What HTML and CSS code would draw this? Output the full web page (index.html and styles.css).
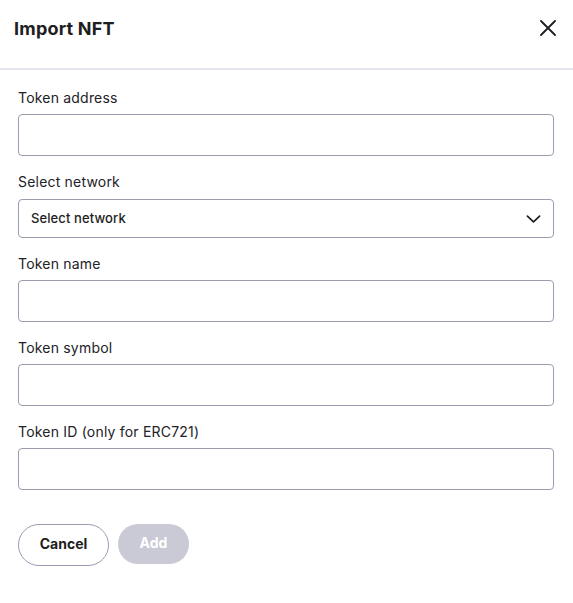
FILE: index.html
```html
<!DOCTYPE html>
<html>
<head>
<meta charset="utf-8">
<link rel="stylesheet" href="styles.css">
</head>
<body>
<div class="modal">
  <div class="header">
    <h1 class="title">Import NFT</h1>
    <button class="close" aria-label="Close">
      <svg width="16" height="16" viewBox="0 0 16 16"><path d="M1 1L15 15M15 1L1 15" stroke="#1d1d22" stroke-width="1.8" stroke-linecap="round"/></svg>
    </button>
  </div>
  <form class="body">
    <div class="field">
      <label class="label">Token address</label>
      <input class="input" type="text">
    </div>
    <div class="field">
      <label class="label">Select network</label>
      <div class="select">
        <span>Select network</span>
        <svg width="15" height="10" viewBox="0 0 16 10"><path d="M1.5 2L8 8L14.5 2" fill="none" stroke="#1d1d22" stroke-width="1.8" stroke-linecap="round" stroke-linejoin="round"/></svg>
      </div>
    </div>
    <div class="field">
      <label class="label">Token name</label>
      <input class="input" type="text">
    </div>
    <div class="field">
      <label class="label">Token symbol</label>
      <input class="input" type="text">
    </div>
    <div class="field">
      <label class="label">Token ID (only for ERC721)</label>
      <input class="input" type="text">
    </div>
    <div class="actions">
      <button type="button" class="btn btn-cancel">Cancel</button>
      <button type="button" class="btn btn-add" disabled>Add</button>
    </div>
  </form>
</div>
</body>
</html>
```
FILE: styles.css
```css
* { box-sizing: border-box; }
html, body { margin: 0; padding: 0; background: #fff; }
body { font-family: Inter, "Open Sans", sans-serif; color: #1d1d22; }
.modal { width: 573px; }
.header {
  height: 70px;
  display: flex;
  align-items: center;
  justify-content: space-between;
  padding: 0 14px 12px 14px;
  border-bottom: 2px solid #e6e5f0;
}
.title { margin: 0; font-size: 18px; font-weight: 700; letter-spacing: 0.2px; }
.close { border: 0; background: none; padding: 0; margin-right: 3px; display: flex; cursor: pointer; }
.body { padding: 18px 19px 0 18px; }
.field { display: flex; flex-direction: column; margin-bottom: 16px; }
.label { font-size: 14px; line-height: 20px; margin-bottom: 6px; color: #222228; letter-spacing: 0.2px; }
.input {
  height: 42px;
  border: 1px solid #9b9eb0;
  border-radius: 4px;
  font: inherit;
  padding: 0 12px;
  background: #fff;
}
.select {
  height: 39px;
  margin-top: 1px;
  border: 1px solid #9b9eb0;
  border-radius: 4px;
  display: flex;
  align-items: center;
  justify-content: space-between;
  padding: 0 12px 2px 12px;
  font-size: 13px;
  font-weight: 500;
  letter-spacing: 0.1px;
}
.select svg { margin-top: 2px; }
.actions { display: flex; gap: 9px; align-items: flex-start; padding-top: 18px; }
.btn {
  font-family: inherit;
  font-size: 14px;
  font-weight: 700;
  border-radius: 21px;
  padding: 0 0 3px 0;
  cursor: pointer;
}
.btn-cancel {
  width: 91px; height: 42px;
  border: 1px solid #9d9cb5;
  background: #fff;
  color: #1d1d22;
}
.btn-add {
  width: 71px; height: 40px;
  border: 0;
  background: #c9cad6;
  color: #fff;
}
```
